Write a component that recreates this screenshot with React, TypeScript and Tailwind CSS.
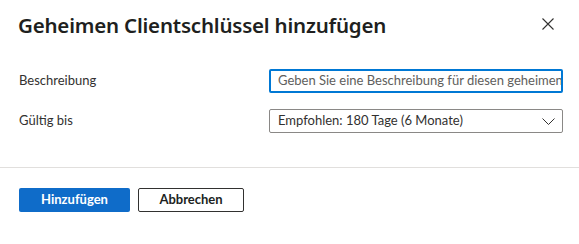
export default function App() {
  return (
    <div className="w-[579px] h-[244px] bg-white text-[#323130] font-['Lato',sans-serif]">
      {/* Header */}
      <div className="flex items-start justify-between pl-[18px] pr-[25px] pt-[11px]">
        <h2 className="font-['Noto_Sans',sans-serif] text-[20.5px] leading-[28px] font-semibold text-[#201f1e] tracking-[-0.2px]">
          Geheimen Clientschlüssel hinzufügen
        </h2>
        <button className="mt-[7px] text-[#323130]">
          <svg width="12" height="12" viewBox="0 0 12 12" fill="none" stroke="currentColor" strokeWidth="1.1">
            <path d="M0.5 0.5L11.5 11.5M11.5 0.5L0.5 11.5" />
          </svg>
        </button>
      </div>

      {/* Form */}
      <div className="pl-[19px] pr-[16px] pt-[30px] flex flex-col gap-[16px]">
        <div className="flex items-center">
          <label className="w-[250px] text-[13px] text-[#323130]">
            Beschreibung
          </label>
          <div className="w-[294px] h-[24px] border-2 border-[#0078d4] rounded-[2px] flex items-center pl-[7px] overflow-hidden">
            <span className="w-px h-[15px] bg-[#201f1e]" />
            <span className="text-[13px] text-[#605e5c] whitespace-nowrap">
              Geben Sie eine Beschreibung für diesen geheimen Clientschlüssel ein.
            </span>
          </div>
        </div>
        <div className="flex items-center">
          <label className="w-[250px] text-[13px] text-[#323130]">
            Gültig bis
          </label>
          <div className="w-[294px] h-[24px] border border-[#8a8886] rounded-[2px] flex items-center justify-between pl-[8px] pr-[7px]">
            <span className="text-[13px] text-[#323130] whitespace-nowrap">
              Empfohlen: 180 Tage (6 Monate)
            </span>
            <svg width="13" height="7" viewBox="0 0 13 7" fill="none" stroke="#323130" strokeWidth="1">
              <path d="M0.5 0.5L6.5 6.5L12.5 0.5" />
            </svg>
          </div>
        </div>
      </div>

      <div className="mt-[34px] h-px bg-[#e1dfdd]" />

      {/* Footer */}
      <div className="flex gap-[8px] pl-[19px] pt-[20px]">
        <button className="w-[111px] h-[24px] rounded-[2px] bg-[#0f6cc9] text-white text-[13px] font-bold">
          Hinzufügen
        </button>
        <button className="w-[106px] h-[24px] rounded-[2px] border border-[#323130] bg-white text-[#201f1e] text-[13px] font-bold">
          Abbrechen
        </button>
      </div>
    </div>
  );
}
